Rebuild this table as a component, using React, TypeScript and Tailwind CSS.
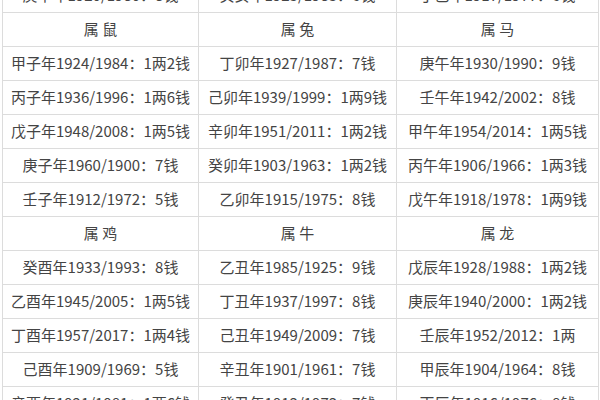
const rows: string[][] = [
  ['庚申年1920/1980：8钱', '癸亥年1923/1983：6钱', '丁巳年1917/1977：6钱'],
  ['属 鼠', '属 兔', '属 马'],
  ['甲子年1924/1984：1两2钱', '丁卯年1927/1987：7钱', '庚午年1930/1990：9钱'],
  ['丙子年1936/1996：1两6钱', '己卯年1939/1999：1两9钱', '壬午年1942/2002：8钱'],
  ['戊子年1948/2008：1两5钱', '辛卯年1951/2011：1两2钱', '甲午年1954/2014：1两5钱'],
  ['庚子年1960/1900：7钱', '癸卯年1903/1963：1两2钱', '丙午年1906/1966：1两3钱'],
  ['壬子年1912/1972：5钱', '乙卯年1915/1975：8钱', '戊午年1918/1978：1两9钱'],
  ['属 鸡', '属 牛', '属 龙'],
  ['癸酉年1933/1993：8钱', '乙丑年1985/1925：9钱', '戊辰年1928/1988：1两2钱'],
  ['乙酉年1945/2005：1两5钱', '丁丑年1937/1997：8钱', '庚辰年1940/2000：1两2钱'],
  ['丁酉年1957/2017：1两4钱', '己丑年1949/2009：7钱', '壬辰年1952/2012：1两'],
  ['己酉年1909/1969：5钱', '辛丑年1901/1961：7钱', '甲辰年1904/1964：8钱'],
  ['辛酉年1921/1981：1两6钱', '癸丑年1913/1973：7钱', '丙辰年1916/1976：8钱'],
];

export default function App() {
  return (
    <div className="h-[400px] w-[600px] overflow-hidden bg-white">
      <div
        className="-mt-[21px] ml-[2px] w-[596px] border-l border-[#dcdcdc] text-[15px] text-[#444]"
        style={{ fontFamily: '"Noto Sans CJK SC", "Noto Sans", sans-serif' }}
      >
        {rows.map((row, i) => (
          <div key={i} className="grid grid-cols-[196px_198px_202px]">
            {row.map((cell, j) => (
              <div
                key={j}
                className="flex h-[34px] items-center justify-center whitespace-nowrap border-b border-r border-[#dcdcdc]"
              >
                {cell}
              </div>
            ))}
          </div>
        ))}
      </div>
    </div>
  );
}
